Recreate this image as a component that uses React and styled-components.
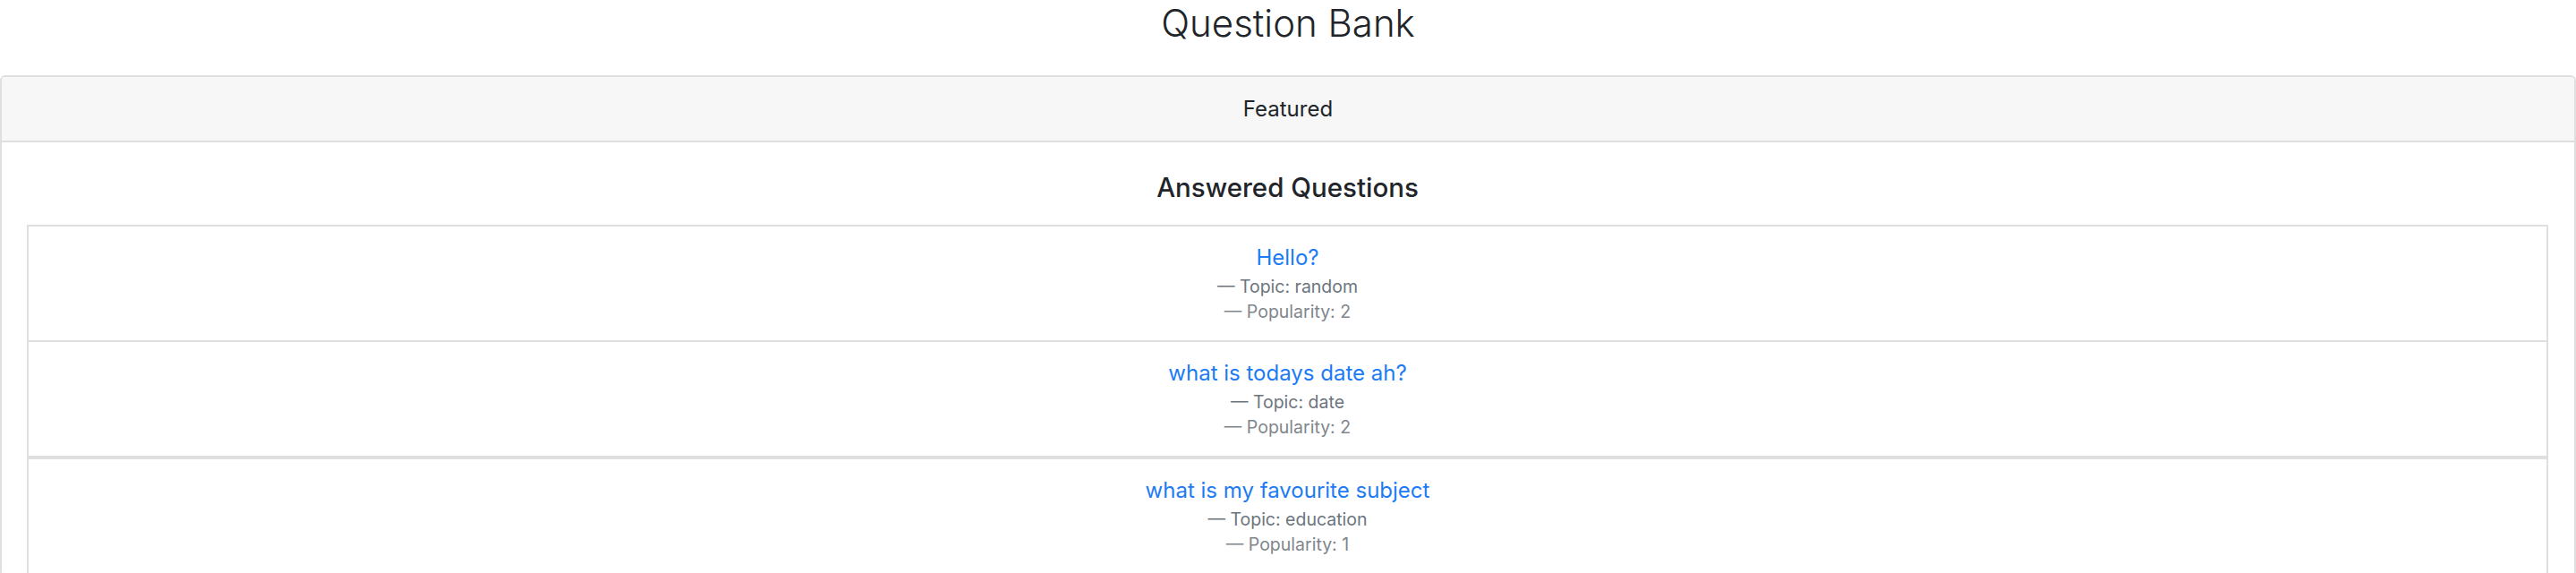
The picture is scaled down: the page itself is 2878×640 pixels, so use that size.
import React from 'react'
import styled, { createGlobalStyle } from 'styled-components'

const GlobalStyle = createGlobalStyle`
  html, body {
    margin: 0;
    padding: 0;
    background: #fff;
  }
  body {
    font-family: Inter, "Noto Sans", "Liberation Sans", sans-serif;
    color: #212529;
  }
`

const Page = styled.div`
  display: flex;
  flex-direction: column;
  width: 100%;
`

const PageTitle = styled.h1`
  margin: 0 0 32px;
  font-size: 42px;
  font-weight: 300;
  line-height: 52px;
  text-align: center;
  color: #212529;
`

const Card = styled.section`
  display: flex;
  flex-direction: column;
  border: 2px solid #dfdfdf;
  border-radius: 6px;
  background: #fff;
  overflow: hidden;
`

const CardHeader = styled.header`
  padding: 18px 30px;
  background: #f7f7f7;
  border-bottom: 2px solid #dfdfdf;
  font-size: 24px;
  line-height: 35px;
  text-align: center;
`

const CardBody = styled.div`
  display: flex;
  flex-direction: column;
  padding: 32px 29px 0 28px;
`

const SectionTitle = styled.h5`
  margin: 0 0 24px;
  font-size: 29.5px;
  font-weight: 500;
  line-height: 36px;
  text-align: center;
`

const ListGroup = styled.ul`
  display: flex;
  flex-direction: column;
  margin: 0;
  padding: 0;
  list-style: none;
  border: 2px solid #dfdfdf;
  border-bottom: 0;
`

const ListItem = styled.li`
  display: flex;
  flex-direction: column;
  align-items: center;
  padding: 17px 30px 18px;
  border-bottom: 2px solid #dfdfdf;
`

const QuestionLink = styled.a`
  font-size: 24px;
  line-height: 36px;
  color: #1d7bf5;
  text-decoration: none;
`

const Footer = styled.div`
  font-size: 19.5px;
  line-height: 28px;
  color: ${({ $muted }) => ($muted ? '#80868c' : '#6c757d')};
`

const groups = [
  [
    { title: 'Hello?', topic: 'random', popularity: 2 },
    { title: 'what is todays date ah?', topic: 'date', popularity: 2 },
  ],
  [{ title: 'what is my favourite subject', topic: 'education', popularity: 1 }],
]

export default function App() {
  return (
    <Page>
      <GlobalStyle />
      <PageTitle>Question Bank</PageTitle>
      <Card>
        <CardHeader>Featured</CardHeader>
        <CardBody>
          <SectionTitle>Answered Questions</SectionTitle>
          {groups.map((items, i) => (
            <ListGroup key={i}>
              {items.map((q) => (
                <ListItem key={q.title}>
                  <QuestionLink href="#">{q.title}</QuestionLink>
                  <Footer>{'\u2014\u00a0'}Topic: {q.topic}</Footer>
                  <Footer $muted>{'\u2014\u00a0'}Popularity: {q.popularity}</Footer>
                </ListItem>
              ))}
            </ListGroup>
          ))}
        </CardBody>
      </Card>
    </Page>
  )
}
